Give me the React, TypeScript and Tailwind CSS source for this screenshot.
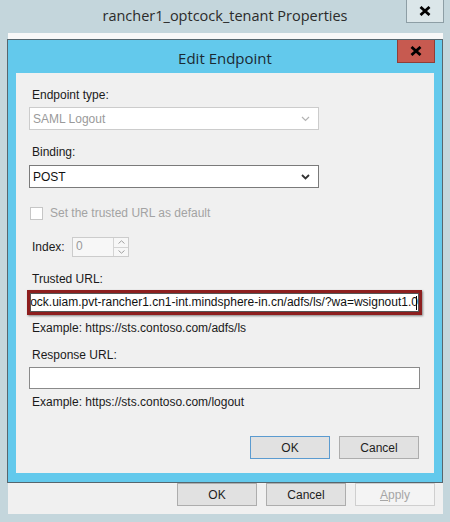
import { ReactNode } from 'react'

const URL_TEXT = 'ock.uiam.pvt-rancher1.cn1-int.mindsphere-in.cn/adfs/ls/?wa=wsignout1.0'

function Chevron({ disabled }: { disabled?: boolean }) {
  return (
    <svg width="9" height="6" viewBox="0 0 9 6" className="shrink-0">
      <polyline points="1,1 4.5,4.5 8,1" fill="none"
        stroke={disabled ? '#b4b4b4' : '#333333'} strokeWidth={disabled ? 1.2 : 1.8} />
    </svg>
  )
}

function CloseX() {
  return (
    <svg width="12" height="10" viewBox="0 0 12 10">
      <path d="M1.5 1 L10.5 9 M10.5 1 L1.5 9" stroke="#000" strokeWidth="2.8" />
    </svg>
  )
}

function Label({ children, className = '' }: { children: ReactNode; className?: string }) {
  return <div className={`h-[14px] leading-[14px] text-[12px] text-[#1a1a1a] pl-[16px] ${className}`}>{children}</div>
}

function WinButton({ children, primary, disabled }: { children: ReactNode; primary?: boolean; disabled?: boolean }) {
  const look = disabled
    ? 'bg-[#f4f4f4] border-[#cfcfcf] text-[#a6a6a6]'
    : primary
      ? 'bg-[#e1e1e1] border-[#5b9bd0] text-[#1e1e1e]'
      : 'bg-[#e1e1e1] border-[#adadad] text-[#1e1e1e]'
  return (
    <div className={`w-[80px] h-[23px] border flex items-center justify-center text-[12px] ${look}`}>
      {children}
    </div>
  )
}

export default function App() {
  return (
    <div className="w-[450px] h-[522px] bg-[#c4d6dc] overflow-hidden font-['Liberation_Sans',Arial,sans-serif]">
      {/* outer window title bar */}
      <div className="relative h-[33px] flex items-center justify-center">
        <span className="text-[14.5px] text-[#2b2b2b] font-['Open_Sans',sans-serif] pb-[1px]">
          rancher1_optcock_tenant Properties
        </span>
        <div className="absolute right-[6px] top-0 w-[38px] h-[23px] bg-[#dbe6e9] border border-[#8d9ea5] border-t-0 flex items-center justify-center">
          <CloseX />
        </div>
      </div>

      {/* outer window body */}
      <div className="ml-[8px] w-[435px] bg-[#f0f0f0] pb-[8px]">
        <div className="h-[6px] bg-[#f8f8f8]" />

        {/* Edit Endpoint dialog */}
        <div className="-ml-px w-[436px] h-[444px] border border-[#56666e] bg-[#63c9ec] px-[8px] pb-[9px] flex flex-col">
          <div className="relative h-[33px] flex items-center justify-center">
            <span className="text-[15px] text-[#1b2a33] font-['Open_Sans',sans-serif] pt-[3px]">Edit Endpoint</span>
            <div className="absolute right-[-1px] top-0 w-[38px] h-[23px] bg-[#c75a50] border border-[#8f3e38] border-t-0 flex items-center justify-center">
              <CloseX />
            </div>
          </div>

          <div className="flex-1 bg-[#f0f0f0] pt-[15px] flex flex-col">
            <Label>Endpoint type:</Label>
            <div className="mt-[5px] ml-[13px] w-[290px] h-[23px] bg-white border border-[#cccccc] flex items-center justify-between pl-[3px] pr-[8px]">
              <span className="text-[12px] text-[#9a9a9a]">SAML Logout</span>
              <Chevron disabled />
            </div>

            <Label className="mt-[15px]">Binding:</Label>
            <div className="mt-[6px] ml-[13px] w-[290px] h-[23px] bg-white border border-[#7a7a7a] flex items-center justify-between pl-[3px] pr-[8px]">
              <span className="text-[12px] text-[#111]">POST</span>
              <Chevron />
            </div>

            <div className="mt-[18px] h-[14px] flex items-center pl-[14px] gap-[7px]">
              <div className="w-[13px] h-[13px] bg-white border border-[#c6c6c6]" />
              <span className="text-[12px] text-[#a3a3a3]">Set the trusted URL as default</span>
            </div>

            <div className="mt-[17px] h-[20px] flex items-center pl-[16px]">
              <span className="text-[12px] text-[#1a1a1a] w-[40px]">Index:</span>
              <div className="w-[57px] h-[20px] bg-[#f7f7f7] border border-[#cccccc] flex">
                <span className="flex-1 text-[12px] text-[#9a9a9a] pl-[3px] leading-[17px]">0</span>
                <div className="w-[15px] flex flex-col border-l border-[#d4d4d4]">
                  <div className="flex-1 flex items-center justify-center border-b border-[#d4d4d4]">
                    <svg width="7" height="4" viewBox="0 0 7 4"><polyline points="0.5,3.5 3.5,0.8 6.5,3.5" fill="none" stroke="#a0a0a0" strokeWidth="1" /></svg>
                  </div>
                  <div className="flex-1 flex items-center justify-center">
                    <svg width="7" height="4" viewBox="0 0 7 4"><polyline points="0.5,0.5 3.5,3.2 6.5,0.5" fill="none" stroke="#a0a0a0" strokeWidth="1" /></svg>
                  </div>
                </div>
              </div>
            </div>

            <Label className="mt-[15px]">Trusted URL:</Label>
            <div className="mt-[4px] ml-[11px] w-[395px] h-[25px] border-[3px] border-[#8d1f1f] shadow-[1px_1px_2px_rgba(0,0,0,0.45)] bg-white">
              <div className="h-full border border-[#555] flex items-center justify-end overflow-hidden pr-[1px]">
                <span className="whitespace-nowrap text-[12px] text-[#111] leading-[15px]">{URL_TEXT}</span>
                <span className="w-px h-[14px] bg-black shrink-0 -ml-[2px]" />
              </div>
            </div>

            <Label className="mt-[6px] pl-[13px]">Example: https://sts.contoso.com/adfs/ls</Label>

            <Label className="mt-[13px]">Response URL:</Label>
            <div className="mt-[5px] ml-[13px] w-[391px] h-[22px] bg-white border border-[#8a8a8a]" />

            <Label className="mt-[6px] pl-[13px]">Example: https://sts.contoso.com/logout</Label>

            <div className="mt-[27px] flex justify-end gap-[9px] pr-[15px]">
              <WinButton primary>OK</WinButton>
              <WinButton>Cancel</WinButton>
            </div>
          </div>
        </div>

        {/* outer buttons */}
        <div className="flex justify-end gap-[9px] pr-[8px]">
          <WinButton>OK</WinButton>
          <WinButton>Cancel</WinButton>
          <WinButton disabled><span><span className="underline">A</span>pply</span></WinButton>
        </div>
      </div>
    </div>
  )
}
